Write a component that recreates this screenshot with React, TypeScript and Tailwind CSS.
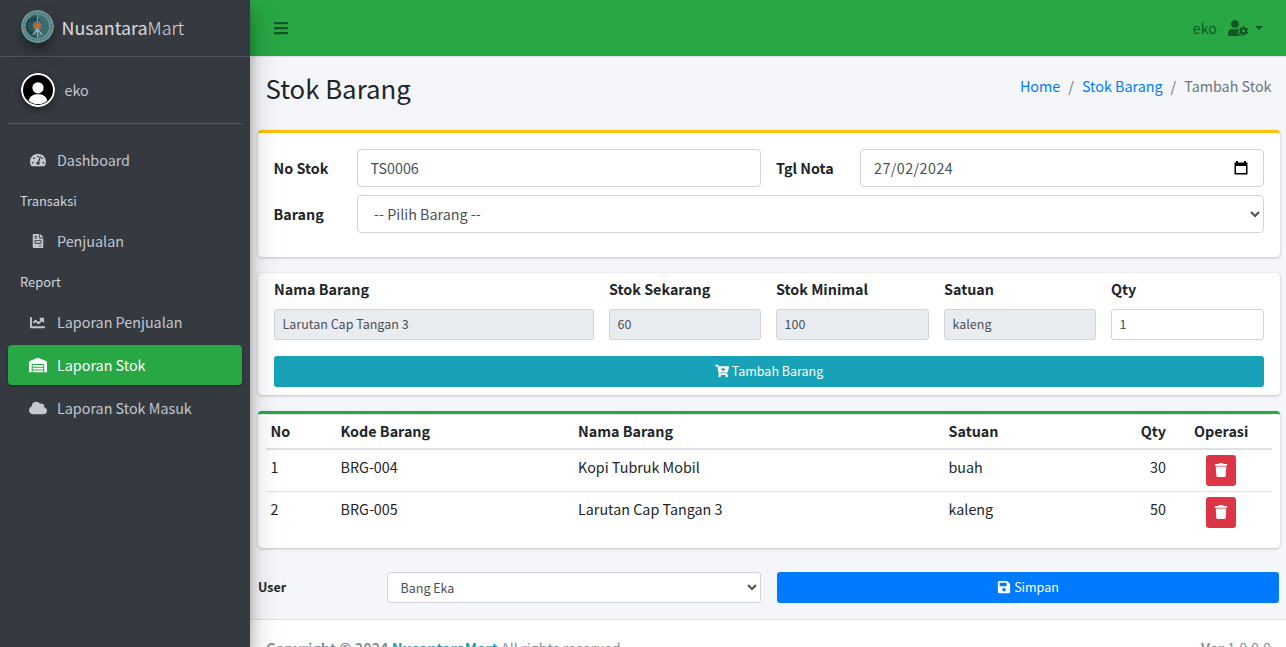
import type { ReactNode } from "react";
import type { IconType } from "react-icons";
import {
  FaBars,
  FaCartPlus,
  FaChartLine,
  FaCloud,
  FaFileInvoice,
  FaSave,
  FaTachometerAlt,
  FaTrash,
  FaUserCog,
  FaWarehouse,
} from "react-icons/fa";

const cardShadow = "shadow-[0_0_1px_rgba(0,0,0,0.125),0_1px_3px_rgba(0,0,0,0.2)]";

function BrandLogo() {
  return (
    <svg
      viewBox="0 0 34 34"
      className="h-[33px] w-[33px] shrink-0 rounded-full shadow-[0_10px_20px_rgba(0,0,0,0.19),0_6px_6px_rgba(0,0,0,0.23)]"
    >
      <circle cx="17" cy="17" r="17" fill="#6b9899" />
      <circle cx="17" cy="17" r="14.2" fill="none" stroke="#4a7073" strokeWidth="2.2" strokeDasharray="1.5 1.1" />
      <circle cx="17" cy="17" r="12" fill="#3a6f71" />
      <path d="M17 5a12 12 0 0 0 0 24z" fill="#2a5558" />
      <circle cx="13.500" cy="16.500" r="7.500" fill="none" stroke="#173c40" strokeWidth="2.400" strokeDasharray="2.200 1.300" />
      <path d="M17 5v24" stroke="#86a3a2" strokeWidth="1" />
      <circle cx="17" cy="16.500" r="5" fill="#77736a" />
      <circle cx="17" cy="16" r="2.400" fill="#d9652b" />
      <path d="M12.500 25.500l4.500-6 4.500 6M17 20v7" stroke="#a3aeaa" strokeWidth="1.600" fill="none" />
      <circle cx="2.800" cy="22" r="1.200" fill="#c4733c" />
      <circle cx="31.200" cy="22" r="1.200" fill="#c4733c" />
    </svg>
  );
}

function Avatar() {
  return (
    <svg
      viewBox="0 0 34 34"
      className="h-[34px] w-[34px] shrink-0 rounded-full shadow-[0_3px_6px_rgba(0,0,0,0.16),0_3px_6px_rgba(0,0,0,0.23)]"
    >
      <circle cx="17" cy="17" r="17" fill="#fff" />
      <circle cx="17" cy="17" r="15" fill="#000" />
      <circle cx="17" cy="14.8" r="5.6" fill="#fff" />
      <path d="M7.7 27.4c1.2-4.4 4.6-6.2 9.3-6.2s8.100 1.800 9.300 6.200C24 30 20.700 31 17 31s-7-1-9.300-3.600z" fill="#fff" />
    </svg>
  );
}

function NavItem({ icon: Icon, label, size, active }: { icon: IconType; label: string; size: string; active?: boolean }) {
  return (
    <a
      className={
        active
          ? "mb-[3px] flex h-10 items-center rounded-[4px] bg-[#28a745] pl-4 text-white shadow-[0_1px_3px_rgba(0,0,0,0.12),0_1px_2px_rgba(0,0,0,0.24)]"
          : "mb-[3px] flex h-10 items-center pl-4 text-[#c2c7d0]"
      }
    >
      <span className="flex w-[27px] shrink-0 justify-center">
        <Icon className={size} />
      </span>
      <span className="ml-1.5">{label}</span>
    </a>
  );
}

function NavHeader({ children }: { children: ReactNode }) {
  return <div className="flex h-[38px] items-center pb-0.5 pl-3 text-[12.9px] text-[#d0d4db]">{children}</div>;
}

function Field({ label, value, disabled }: { label: string; value: string; disabled?: boolean }) {
  return (
    <div className="min-w-0">
      <div className="font-bold leading-6">{label}</div>
      <input
        defaultValue={value}
        disabled={disabled}
        className={
          disabled
            ? "mt-2 block h-[31px] w-full rounded-[3px] border border-[#ced4da] bg-[#e9ecef] px-[7.500px] pb-0.5 text-[12.5px] text-[#495057]"
            : "mt-2 block h-[31px] w-full rounded-[3px] border border-[#ced4da] bg-white px-[7.500px] pb-0.5 text-[12.5px] text-[#495057]"
        }
      />
    </div>
  );
}

const rows = [
  { no: "1", kode: "BRG-004", nama: "Kopi Tubruk Mobil", satuan: "buah", qty: "30" },
  { no: "2", kode: "BRG-005", nama: "Larutan Cap Tangan 3", satuan: "kaleng", qty: "50" },
];

const tableGrid = "grid grid-cols-[70px_237.500px_370.500px_145px_83px_100px]";

export default function App() {
  return (
    <div className="flex h-[647px] w-full overflow-hidden bg-[#f4f6f9] font-['Noto_Sans_CJK_SC',sans-serif] text-[14.33px] leading-6 text-[#212529]">
      <aside className="relative z-10 w-[250px] shrink-0 bg-[#343a40] text-[#c2c7d0] shadow-[0_14px_28px_rgba(0,0,0,0.25),0_10px_10px_rgba(0,0,0,0.22)]">
        <div className="flex h-[57px] items-center border-b border-[#4b545c] pb-[3px] pl-[21px]">
          <BrandLogo />
          <span className="ml-[7.500px] text-[17.9px] text-white/80">
            <span className="font-normal">Nusantara</span>
            <span className="font-light">Mart</span>
          </span>
        </div>
        <div className="px-2">
          <div className="flex h-[67px] items-center border-b border-[#4f5962] pl-[12.500px]">
            <Avatar />
            <span className="ml-[10px]">eko</span>
          </div>
          <nav className="pt-4">
            <NavItem icon={FaTachometerAlt} label="Dashboard" size="text-[16px]" />
            <NavHeader>Transaksi</NavHeader>
            <NavItem icon={FaFileInvoice} label="Penjualan" size="text-[14px]" />
            <NavHeader>Report</NavHeader>
            <NavItem icon={FaChartLine} label="Laporan Penjualan" size="text-[15px]" />
            <NavItem icon={FaWarehouse} label="Laporan Stok" size="text-[18px]" active />
            <NavItem icon={FaCloud} label="Laporan Stok Masuk" size="text-[18px]" />
          </nav>
        </div>
      </aside>

      <div className="flex min-w-0 flex-1 flex-col">
        <header className="flex h-[57px] shrink-0 items-center justify-between border-b border-[#dee2e6] bg-[#28a745] pl-[23px] pr-[23px] text-black/50">
          <FaBars className="text-[16px]" />
          <div className="flex items-center">
            <span>eko</span>
            <FaUserCog className="ml-[11px] text-[20px]" />
            <span className="ml-[7px] border-x-[4.500px] border-t-[4.500px] border-x-transparent border-t-black/50" />
          </div>
        </header>

        <main className="flex h-[562px] shrink-0 flex-col pl-2 pr-1.5">
          <div className="flex h-[73px] shrink-0 items-start justify-between pl-[7.500px] pr-[8.500px] pt-[14px]">
            <h1 className="text-[25.8px] leading-[34px]">Stok Barang</h1>
            <div className="flex pt-[3px] text-[#6c757d]">
              <a className="text-[#007bff]">Home</a>
              <span className="px-2">/</span>
              <a className="text-[#007bff]">Stok Barang</a>
              <span className="px-2">/</span>
              <span>Tambah Stok</span>
            </div>
          </div>

          <section className={`h-[127px] shrink-0 rounded-[4px] border-t-[3px] border-[#ffc107] bg-white pl-[15.500px] pr-4 pt-4 ${cardShadow}`}>
            <div className="flex h-[38px] items-center">
              <label className="w-[83.500px] shrink-0 font-bold">No Stok</label>
              <input
                defaultValue="TS0006"
                className="h-[38px] w-[404px] shrink-0 rounded-[4px] border border-[#ced4da] bg-white px-[12.500px] pb-0.5 text-[#495057]"
              />
              <label className="ml-[15px] w-[84px] shrink-0 font-bold">Tgl Nota</label>
              <div className="flex h-[38px] flex-1 items-center justify-between rounded-[4px] border border-[#ced4da] pl-[13px] pr-[15px] text-[#495057]">
                <span className="tracking-[0.03em]">27/02/2024</span>
                <svg viewBox="0 0 14 15" className="h-[15px] w-[14px]" fill="#000">
                  <path fillRule="evenodd" d="M2 0h2v1.500h6V0h2v1.500h1.500v12H.5v-12H2zM2 5v7h10V5z" />
                </svg>
              </div>
            </div>
            <div className="mt-2 flex h-[38px] items-center">
              <label className="w-[83.500px] shrink-0 font-bold">Barang</label>
              <select className="h-[38px] flex-1 rounded-[4px] border border-[#ced4da] bg-white px-3 pb-0.5 text-[#495057]">
                <option>-- Pilih Barang --</option>
              </select>
            </div>
          </section>

          <section className={`mt-4 h-[122px] shrink-0 rounded-[4px] bg-white px-4 pt-1 ${cardShadow}`}>
            <div className="grid grid-cols-[320px_152px_153px_152px_153px] gap-x-[15px]">
              <Field label="Nama Barang" value="Larutan Cap Tangan 3" disabled />
              <Field label="Stok Sekarang" value="60" disabled />
              <Field label="Stok Minimal" value="100" disabled />
              <Field label="Satuan" value="kaleng" disabled />
              <Field label="Qty" value="1" />
            </div>
            <button className="mt-4 flex h-[31px] w-full items-center justify-center gap-[3px] rounded-[3px] bg-[#17a2b8] pb-px text-[12.5px] text-white">
              <FaCartPlus className="text-[14px]" />
              Tambah Barang
            </button>
          </section>

          <section className={`mt-4 h-[137px] shrink-0 rounded-[4px] border-t-[3px] border-[#28a745] bg-white px-2 ${cardShadow}`}>
            <div className={`${tableGrid} h-9 items-center border-b-2 border-t border-[#dee2e6] pb-0.5 font-bold`}>
              <span className="pl-[4.500px]">No</span>
              <span className="pl-[4.500px]">Kode Barang</span>
              <span className="pl-[4.500px]">Nama Barang</span>
              <span className="pl-[4.500px]">Satuan</span>
              <span className="pr-[6px] text-right">Qty</span>
              <span className="pl-[22px]">Operasi</span>
            </div>
            {rows.map((r, i) => (
              <div
                key={r.no}
                className={
                  i > 0
                    ? `${tableGrid} h-[42px] border-t border-[#dee2e6] pt-[5px]`
                    : `${tableGrid} h-[41px] pt-[5px]`
                }
              >
                <span className="pl-[4.500px]">{r.no}</span>
                <span className="pl-[4.500px]">{r.kode}</span>
                <span className="pl-[4.500px]">{r.nama}</span>
                <span className="pl-[4.500px]">{r.satuan}</span>
                <span className="pr-[6px] text-right">{r.qty}</span>
                <span className="pl-[34px]">
                  <button className="flex h-[31px] w-[30px] items-center justify-center rounded-[3px] bg-[#dc3545] pb-0.5 text-white">
                    <FaTrash className="text-[14px]" />
                  </button>
                </span>
              </div>
            ))}
          </section>

          <div className="mt-6 flex h-[31px] shrink-0 items-center pr-px">
            <label className="w-[129px] shrink-0 pb-0.5 text-[12.5px] font-bold">User</label>
            <select className="h-[31px] w-[374px] shrink-0 rounded-[3px] border border-[#ced4da] bg-white px-[8.500px] text-[12.5px] text-[#495057]">
              <option>Bang Eka</option>
            </select>
            <button className="ml-4 flex h-[31px] flex-1 items-center justify-center gap-[3px] rounded-[3px] bg-[#007bff] pb-px text-[12.5px] text-white">
              <FaSave className="text-[14px]" />
              Simpan
            </button>
          </div>
        </main>

        <footer className="flex h-[57px] shrink-0 justify-between border-t border-[#dee2e6] bg-white px-4 pt-4 text-[#869099]">
          <div>
            <b>
              Copyright © 2024 <span className="text-[#17a2b8]">NusantaraMart</span>
            </b>{" "}
            All rights reserved.
          </div>
          <div className="-mr-px">
            <b>Ver</b> 1.0.0.0
          </div>
        </footer>
      </div>
    </div>
  );
}
